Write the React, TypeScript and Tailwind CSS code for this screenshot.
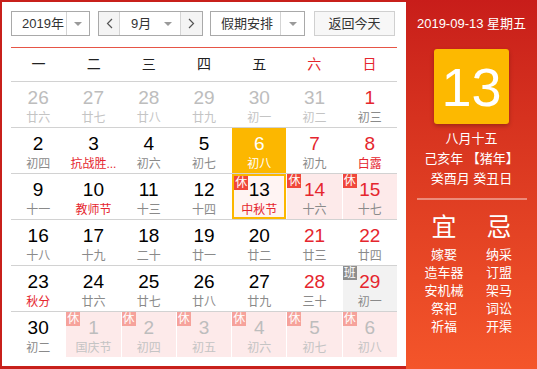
import React from 'react';

type Day = {
  n: number;
  lunar: string;
  red?: boolean;       // weekend / red number
  fest?: boolean;      // lunar line in red
  other?: boolean;     // not this month
  rest?: boolean;      // 休
  work?: boolean;      // 班
  today?: boolean;
  selected?: boolean;
};

const rows: Day[][] = [
  [
    { n: 26, lunar: '廿六', other: true },
    { n: 27, lunar: '廿七', other: true },
    { n: 28, lunar: '廿八', other: true },
    { n: 29, lunar: '廿九', other: true },
    { n: 30, lunar: '初一', other: true },
    { n: 31, lunar: '初二', other: true },
    { n: 1, lunar: '初三', red: true },
  ],
  [
    { n: 2, lunar: '初四' },
    { n: 3, lunar: '抗战胜...', fest: true },
    { n: 4, lunar: '初六' },
    { n: 5, lunar: '初七' },
    { n: 6, lunar: '初八', today: true },
    { n: 7, lunar: '初九', red: true },
    { n: 8, lunar: '白露', red: true, fest: true },
  ],
  [
    { n: 9, lunar: '十一' },
    { n: 10, lunar: '教师节', fest: true },
    { n: 11, lunar: '十三' },
    { n: 12, lunar: '十四' },
    { n: 13, lunar: '中秋节', fest: true, rest: true, selected: true },
    { n: 14, lunar: '十六', red: true, rest: true },
    { n: 15, lunar: '十七', red: true, rest: true },
  ],
  [
    { n: 16, lunar: '十八' },
    { n: 17, lunar: '十九' },
    { n: 18, lunar: '二十' },
    { n: 19, lunar: '廿一' },
    { n: 20, lunar: '廿二' },
    { n: 21, lunar: '廿三', red: true },
    { n: 22, lunar: '廿四', red: true },
  ],
  [
    { n: 23, lunar: '秋分', fest: true },
    { n: 24, lunar: '廿六' },
    { n: 25, lunar: '廿七' },
    { n: 26, lunar: '廿八' },
    { n: 27, lunar: '廿九' },
    { n: 28, lunar: '三十', red: true },
    { n: 29, lunar: '初一', red: true, work: true },
  ],
  [
    { n: 30, lunar: '初二' },
    { n: 1, lunar: '国庆节', other: true, rest: true },
    { n: 2, lunar: '初四', other: true, rest: true },
    { n: 3, lunar: '初五', other: true, rest: true },
    { n: 4, lunar: '初六', other: true, rest: true },
    { n: 5, lunar: '初七', other: true, rest: true },
    { n: 6, lunar: '初八', other: true, rest: true },
  ],
];

const weekdays = ['一', '二', '三', '四', '五', '六', '日'];
const yi = ['嫁娶', '造车器', '安机械', '祭祀', '祈福'];
const ji = ['纳采', '订盟', '架马', '词讼', '开渠'];

function Caret() {
  return <span className="block h-0 w-0 border-x-[4px] border-t-[4px] border-x-transparent border-t-[#9a9a9a]" />;
}

function Cell({ d }: { d: Day }) {
  let bg = 'bg-white';
  if (d.today) bg = 'bg-[#fcb700]';
  else if (d.selected) bg = 'bg-[#fff4f3] border-2 border-[#fcb700]';
  else if (d.rest) bg = 'bg-[#fdeaea]';
  else if (d.work) bg = 'bg-[#f2f2f2]';

  let num = 'text-black';
  if (d.today) num = 'text-white';
  else if (d.other) num = 'text-[#bdbdbd]';
  else if (d.red) num = 'text-[#e5262e]';

  let lun = 'text-[#8a8a8a]';
  if (d.today) lun = 'text-white';
  else if (d.other) lun = 'text-[#c4c4c4]';
  else if (d.fest) lun = 'text-[#e5262e]';

  return (
    <div className={`relative flex h-[45px] min-w-0 flex-col items-center ${d.selected ? 'pt-[3px]' : 'pt-[5px]'} ${bg}`}>
      {d.rest && (
        <span
          className={`absolute left-0 top-0 flex h-[14px] w-[14px] items-center justify-center text-[12px] leading-none text-white ${
            d.other ? 'bg-[#f6a29b]' : 'bg-[#f0473b]'
          }`}
        >
          休
        </span>
      )}
      {d.work && (
        <span className="absolute left-0 top-0 flex h-[14px] w-[14px] items-center justify-center bg-[#8e8e8e] text-[12px] leading-none text-white">
          班
        </span>
      )}
      <span className={`text-[19px] leading-[22px] ${num}`}>{d.n}</span>
      <span className={`mt-[1px] whitespace-nowrap text-center text-[12px] leading-[16px] ${lun}`}>{d.lunar}</span>
    </div>
  );
}

export default function App() {
  return (
    <div
      className="flex h-[369px] w-[537px] overflow-hidden"
      style={{ fontFamily: '"Liberation Sans", "Noto Sans CJK SC", sans-serif' }}
    >
      {/* left: calendar */}
      <div className="flex w-[406px] shrink-0 flex-col border-b-[3px] border-l-2 border-t-2 border-[#c8201b] bg-white pl-[9px] pr-[9px] pt-[9px]">
        {/* toolbar */}
        <div className="flex h-[25px] items-stretch text-[13px] text-[#333]">
          <div className="flex w-[79px] border border-[#a9a9a9]">
            <span className="flex flex-1 items-center pl-[10px]">2019年</span>
            <span className="flex w-[23px] items-center justify-center border-l border-[#d4d4d4]">
              <Caret />
            </span>
          </div>
          <div className="ml-[8px] flex w-[105px] border border-[#a9a9a9]">
            <span className="flex w-[21px] items-center justify-center border-r border-[#d4d4d4] bg-[#f4f4f4] text-[#555]">
              <svg width="7" height="11" viewBox="0 0 7 11"><path d="M6 1L1.5 5.5 6 10" fill="none" stroke="#555" strokeWidth="1.2" /></svg>
            </span>
            <span className="flex flex-1 items-center justify-between pl-[11px] pr-[8px]">
              9月
              <Caret />
            </span>
            <span className="flex w-[22px] items-center justify-center border-l border-[#d4d4d4] bg-[#f4f4f4]">
              <svg width="7" height="11" viewBox="0 0 7 11"><path d="M1 1l4.5 4.5L1 10" fill="none" stroke="#555" strokeWidth="1.2" /></svg>
            </span>
          </div>
          <div className="ml-[7px] flex w-[95px] border border-[#a9a9a9]">
            <span className="flex flex-1 items-center pl-[10px]">假期安排</span>
            <span className="flex w-[24px] items-center justify-center border-l border-[#d4d4d4]">
              <Caret />
            </span>
          </div>
          <div className="ml-[9px] flex w-[81px] items-center justify-center border border-[#d0d0d0] bg-[#f7f7f7]">
            返回今天
          </div>
        </div>

        {/* red rule */}
        <div className="mt-[11px] h-px bg-[#e65546]" />

        {/* week header */}
        <div className="grid h-[33px] grid-cols-7 items-center text-center text-[14px]">
          {weekdays.map((w, i) => (
            <span key={w} className={i >= 5 ? 'text-[#e5262e]' : 'text-[#222]'}>
              {w}
            </span>
          ))}
        </div>

        {/* grid */}
        {rows.map((row, ri) => (
          <div key={ri} className="grid grid-cols-7 gap-x-px border-t border-[#d2d2d2]">
            {row.map((d, ci) => (
              <Cell key={ci} d={d} />
            ))}
          </div>
        ))}
      </div>

      {/* right: detail panel */}
      <div className="flex flex-1 flex-col items-center bg-gradient-to-b from-[#c81d1a] to-[#f4552a] text-white">
        <div className="mt-[16px] text-[13px] leading-[16px]">2019-09-13 星期五</div>
        <div className="mt-[17px] flex h-[75px] w-[75px] items-center justify-center rounded-[3px] bg-[#fdb900] text-[54px] leading-none shadow-[0_2px_4px_rgba(0,0,0,0.25)]">
          13
        </div>
        <div className="mt-[5px] flex flex-col items-center text-[13px] leading-[20px]">
          <span>八月十五</span>
          <span>己亥年 【猪年】</span>
          <span>癸酉月 癸丑日</span>
        </div>
        <div className="mt-[9px] h-[2px] w-[110px] bg-white/40" />
        <div className="mt-[12px] flex w-full justify-center gap-[15px]">
          <div className="flex w-[40px] flex-col items-center">
            <span className="text-[25px] leading-[30px]">宜</span>
            <div className="mt-[4px] flex flex-col items-center text-[13px] leading-[18px]">
              {yi.map((t) => (
                <span key={t}>{t}</span>
              ))}
            </div>
          </div>
          <div className="flex w-[40px] flex-col items-center">
            <span className="text-[25px] leading-[30px]">忌</span>
            <div className="mt-[4px] flex flex-col items-center text-[13px] leading-[18px]">
              {ji.map((t) => (
                <span key={t}>{t}</span>
              ))}
            </div>
          </div>
        </div>
      </div>
    </div>
  );
}
